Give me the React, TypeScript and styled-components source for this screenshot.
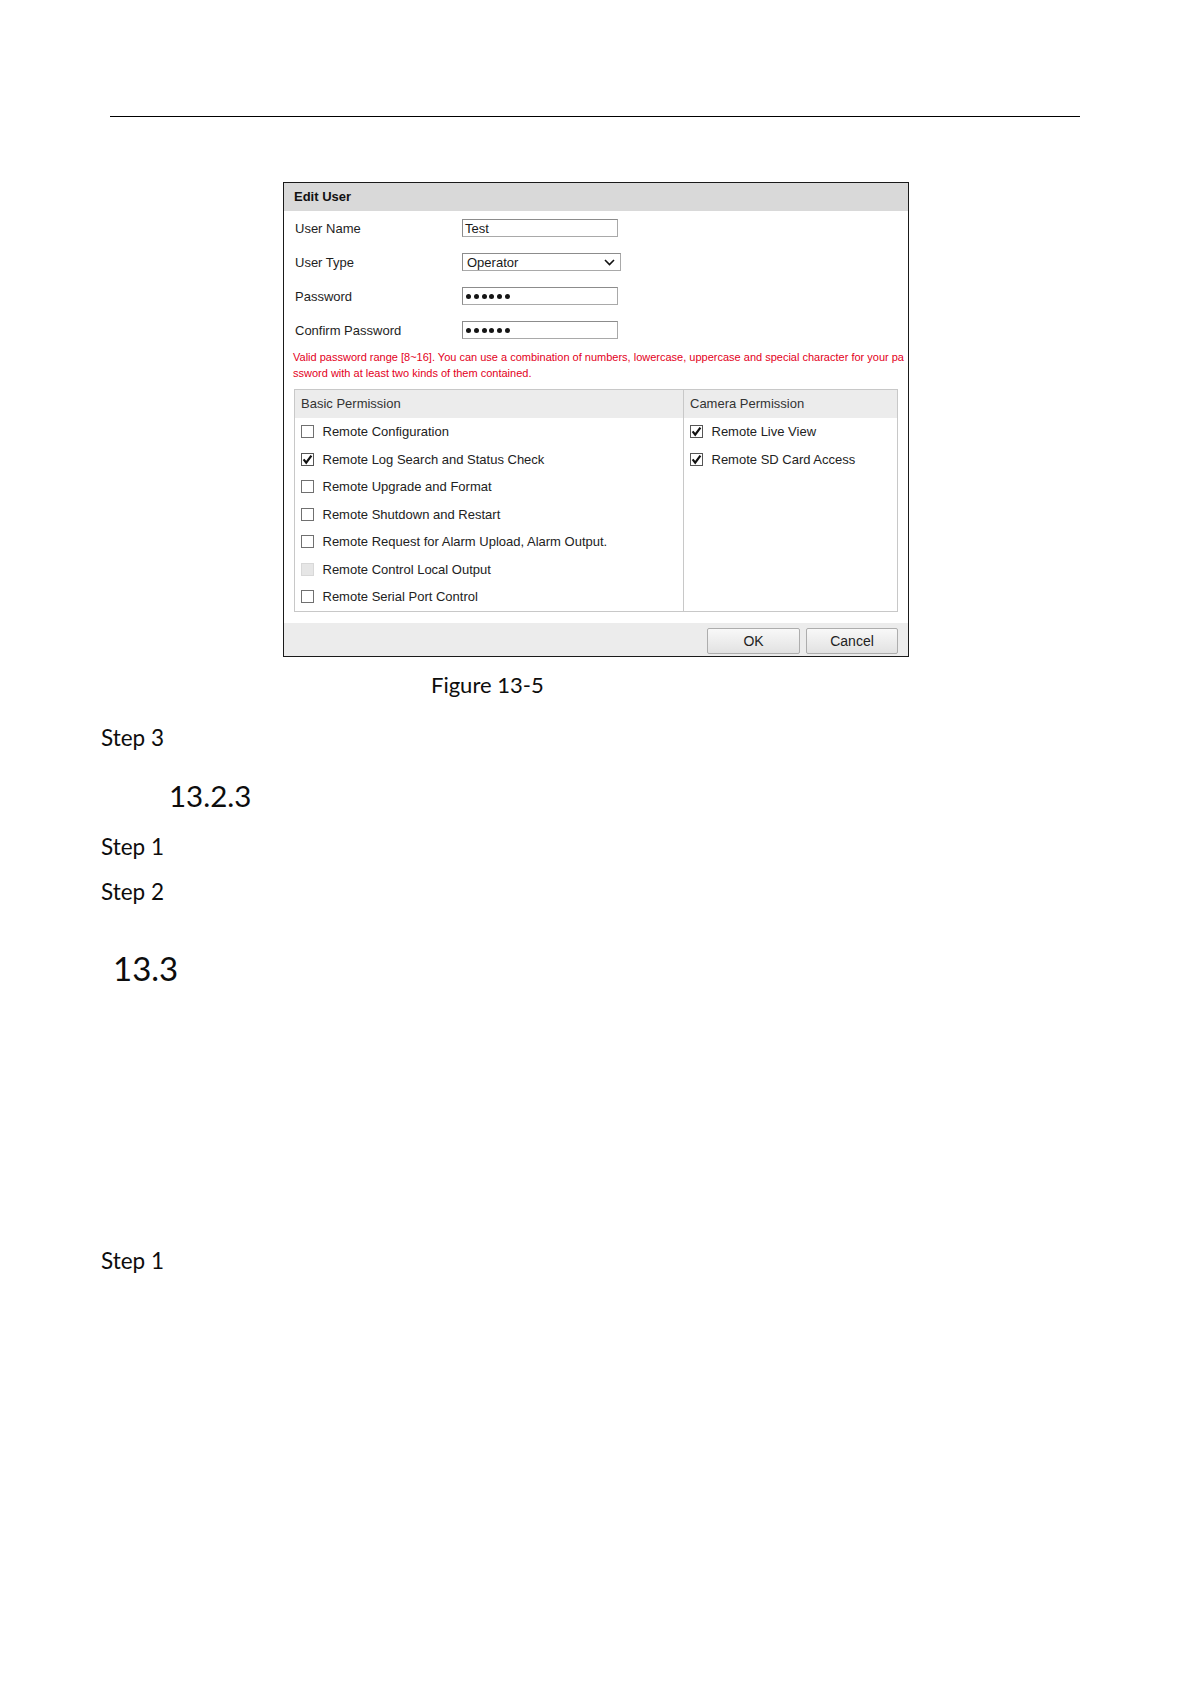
import styled, { createGlobalStyle } from "styled-components";

const GlobalStyle = createGlobalStyle`
  html, body {
    margin: 0;
    padding: 0;
    background: #fff;
  }
  body {
    font-family: "Liberation Sans", Arial, sans-serif;
  }
`;

const Page = styled.div`
  width: 1190px;
  min-height: 1684px;
  box-sizing: border-box;
  padding-top: 116px;
  background: #fff;
  overflow: hidden;
`;

const HeaderRule = styled.div`
  margin-left: 110px;
  width: 970px;
  height: 1px;
  background: #000;
`;

const Dialog = styled.section`
  margin: 65px 0 0 283px;
  width: 626px;
  box-sizing: border-box;
  border: 1px solid #1a1a1a;
  background: #fff;
  font-family: "Liberation Sans", Arial, sans-serif;
  font-size: 13px;
  color: #1e1e1e;
  overflow: hidden;
`;

const DialogTitle = styled.div`
  height: 28px;
  line-height: 28px;
  padding-left: 10px;
  background: #d9d9d9;
  font-weight: bold;
  color: #111;
`;

const FormRow = styled.div`
  display: flex;
  align-items: center;
  height: 34px;
  padding-left: 11px;
`;

const Label = styled.span`
  flex: none;
  width: 167px;
`;

const Field = styled.div<{ $width: number; $pad: number }>`
  display: flex;
  align-items: center;
  justify-content: space-between;
  width: ${(p) => p.$width}px;
  height: 18px;
  box-sizing: border-box;
  padding: 0 5px 0 ${(p) => p.$pad}px;
  border: 1px solid #a9a9a9;
  border-top-color: #8c8c8c;
  border-left-color: #8c8c8c;
  background: #fff;
  color: #1a1a1a;
`;

const Dots = styled.span`
  display: flex;
  gap: 2.8px;
`;

const Dot = styled.span`
  width: 5px;
  height: 5px;
  border-radius: 50%;
  background: #151515;
`;

const Hint = styled.p`
  margin: 2px 0 0 9px;
  font-size: 11px;
  line-height: 16px;
  color: #e3001b;
  white-space: nowrap;
`;

const PermTable = styled.div`
  display: grid;
  grid-template-columns: 389px 1fr;
  margin: 8px 0 0 10px;
  width: 604px;
  box-sizing: border-box;
  border: 1px solid #c8c8c8;
`;

const PermColumn = styled.div<{ $divider?: boolean }>`
  border-right: ${(p) => (p.$divider ? "1px solid #c8c8c8" : "none")};
`;

const PermHead = styled.div`
  height: 28px;
  line-height: 28px;
  padding-left: 6px;
  background: #ececec;
  color: #333;
`;

const PermRow = styled.div`
  display: flex;
  align-items: center;
  gap: 8.5px;
  height: 27.5px;
  padding-left: 6px;
  color: #222;
`;

const Box = styled.span<{ $disabled?: boolean; $checked?: boolean }>`
  display: flex;
  align-items: center;
  justify-content: center;
  flex: none;
  width: 13px;
  height: 13px;
  box-sizing: border-box;
  border: 1px solid
    ${(p) => (p.$disabled ? "#d8d8d8" : p.$checked ? "#555" : "#707070")};
  background: ${(p) => (p.$disabled ? "#e6e6e6" : "#fff")};
`;

const Footer = styled.div`
  display: flex;
  justify-content: flex-end;
  align-items: flex-start;
  gap: 6px;
  margin-top: 11px;
  height: 33px;
  box-sizing: border-box;
  padding: 5px 10px 0 0;
  background: #ececec;
`;

const Button = styled.button<{ $width: number }>`
  width: ${(p) => p.$width}px;
  height: 26px;
  padding: 0;
  border: 1px solid #adadad;
  border-radius: 2px;
  background: linear-gradient(#f8f8f8, #e2e2e2);
  font-family: "Liberation Sans", Arial, sans-serif;
  font-size: 14px;
  color: #222;
`;

const DocLine = styled.p<{ $indent: number; $size: number; $gap: number }>`
  margin: ${(p) => p.$gap}px 0 0 ${(p) => p.$indent}px;
  font-family: Lato, "Open Sans", sans-serif;
  font-size: ${(p) => p.$size}px;
  line-height: 1.2;
  color: #0d0d0d;
`;

function Checkbox({ checked, disabled }: { checked?: boolean; disabled?: boolean }) {
  return (
    <Box $disabled={disabled} $checked={checked}>
      {checked && (
        <svg width="11" height="11" viewBox="0 0 11 11">
          <path d="M1.6 5.4 L4.2 8.6 L9.4 1.6" fill="none" stroke="#111" strokeWidth="2.2" />
        </svg>
      )}
    </Box>
  );
}

function Chevron() {
  return (
    <svg width="11" height="7" viewBox="0 0 11 7">
      <path d="M1 1 L5.5 5.5 L10 1" fill="none" stroke="#111" strokeWidth="1.6" />
    </svg>
  );
}

function Password() {
  return (
    <Dots>
      {[0, 1, 2, 3, 4, 5].map((i) => (
        <Dot key={i} />
      ))}
    </Dots>
  );
}

const basic = [
  { name: "Remote Configuration" },
  { name: "Remote Log Search and Status Check", checked: true },
  { name: "Remote Upgrade and Format" },
  { name: "Remote Shutdown and Restart" },
  { name: "Remote Request for Alarm Upload, Alarm Output." },
  { name: "Remote Control Local Output", disabled: true },
  { name: "Remote Serial Port Control" },
];

const camera = [
  { name: "Remote Live View", checked: true },
  { name: "Remote SD Card Access", checked: true },
];

export default function App() {
  return (
    <Page>
      <GlobalStyle />
      <HeaderRule />
      <Dialog>
        <DialogTitle>Edit User</DialogTitle>
        <FormRow>
          <Label>User Name</Label>
          <Field $width={156} $pad={2}>Test</Field>
        </FormRow>
        <FormRow>
          <Label>User Type</Label>
          <Field $width={159} $pad={4}>
            Operator
            <Chevron />
          </Field>
        </FormRow>
        <FormRow>
          <Label>Password</Label>
          <Field $width={156} $pad={3}>
            <Password />
          </Field>
        </FormRow>
        <FormRow>
          <Label>Confirm Password</Label>
          <Field $width={156} $pad={3}>
            <Password />
          </Field>
        </FormRow>
        <Hint>
          Valid password range [8~16]. You can use a combination of numbers, lowercase, uppercase and special character for your pa
          <br />
          ssword with at least two kinds of them contained.
        </Hint>
        <PermTable>
          <PermColumn $divider>
            <PermHead>Basic Permission</PermHead>
            {basic.map((item) => (
              <PermRow key={item.name}>
                <Checkbox checked={item.checked} disabled={item.disabled} />
                {item.name}
              </PermRow>
            ))}
          </PermColumn>
          <PermColumn>
            <PermHead>Camera Permission</PermHead>
            {camera.map((item) => (
              <PermRow key={item.name}>
                <Checkbox checked={item.checked} />
                {item.name}
              </PermRow>
            ))}
          </PermColumn>
        </PermTable>
        <Footer>
          <Button $width={93}>OK</Button>
          <Button $width={92}>Cancel</Button>
        </Footer>
      </Dialog>
      <DocLine $indent={431} $size={22} $gap={15}>Figure 13-5</DocLine>
      <DocLine $indent={101} $size={22.5} $gap={26}>Step 3</DocLine>
      <DocLine $indent={169} $size={29.5} $gap={27}>13.2.3</DocLine>
      <DocLine $indent={101} $size={22.5} $gap={19.5}>Step 1</DocLine>
      <DocLine $indent={101} $size={22.5} $gap={18}>Step 2</DocLine>
      <DocLine $indent={113} $size={33} $gap={44}>13.3</DocLine>
      <DocLine $indent={101} $size={22.5} $gap={259}>Step 1</DocLine>
    </Page>
  );
}
